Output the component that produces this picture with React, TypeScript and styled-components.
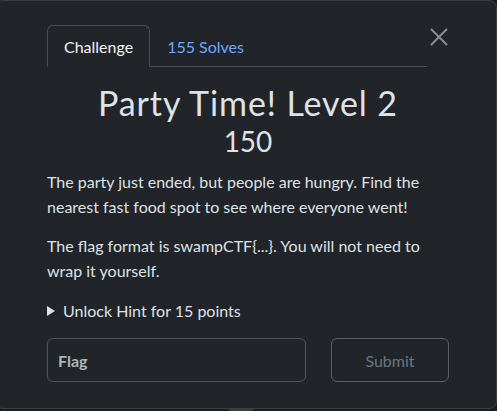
import React from 'react';
import styled, { createGlobalStyle } from 'styled-components';

const GlobalStyle = createGlobalStyle`
  html, body {
    margin: 0;
    padding: 0;
    background: #1b1e21;
    overflow: hidden;
  }
  * { box-sizing: border-box; }
`;

const Modal = styled.div`
  width: 502px;
  height: 409px;
  margin-left: -5px;
  background: #212529;
  border: 1px solid #3a3e43;
  border-radius: 8px;
  padding: 24px 47px 0 51px;
  font-family: Lato, "Open Sans", sans-serif;
  color: #dee2e6;
`;

const Header = styled.div`
  display: flex;
  align-items: flex-start;
  gap: 2px;
`;

const Tabs = styled.div`
  flex: 1;
  display: flex;
  align-items: flex-end;
  border-bottom: 1px solid #495057;
  height: 42px;
`;

const Tab = styled.div<{ active?: boolean }>`
  display: flex;
  align-items: center;
  padding: 0 16px;
  height: 42px;
  margin-bottom: -1px;
  font-size: 16px;
  color: ${p => (p.active ? '#f1f3f5' : '#6ea8fe')};
  border: 1px solid ${p => (p.active ? '#495057' : 'transparent')};
  border-bottom: 1px solid ${p => (p.active ? '#212529' : 'transparent')};
  border-radius: 6px 6px 0 0;
  background: ${p => (p.active ? '#212529' : 'transparent')};
`;

const Close = styled.button`
  width: 20px;
  height: 20px;
  margin-top: 2px;
  padding: 0;
  border: none;
  background: none;
  display: flex;
  align-items: center;
  justify-content: center;
`;

const Title = styled.h3`
  margin: 16px 0 0;
  text-align: center;
  font-size: 34px;
  font-weight: 400;
  line-height: 40px;
  color: #dfe2e6;
  letter-spacing: 0.9px;
`;

const Points = styled.div`
  text-align: center;
  font-size: 28px;
  font-weight: 400;
  line-height: 36px;
  color: #dfe2e6;
`;

const Text = styled.p<{ gap: number }>`
  margin: ${p => p.gap}px 0 0;
  font-size: 16px;
  line-height: 25px;
  color: #dee2e6;
`;

const Hint = styled.div`
  margin-top: 18px;
  display: flex;
  align-items: center;
  gap: 8px;
  font-size: 16px;
  color: #dee2e6;
`;

const Caret = styled.span`
  width: 0;
  height: 0;
  border-top: 5px solid transparent;
  border-bottom: 5px solid transparent;
  border-left: 8px solid #dee2e6;
`;

const FormRow = styled.div`
  margin-top: 18px;
  display: flex;
  gap: 25px;
`;

const FlagInput = styled.input`
  flex: 1;
  height: 44px;
  background: #212529;
  border: 1px solid #4f555b;
  border-radius: 6px;
  padding: 0 10px;
  font-family: Lato, "Open Sans", sans-serif;
  font-size: 16px;
  font-weight: 700;
  color: #dee2e6;
  outline: none;
  &::placeholder {
    color: #adb5bd;
  }
`;

const SubmitButton = styled.button`
  width: 118px;
  height: 44px;
  background: transparent;
  border: 1px solid #5a6066;
  border-radius: 6px;
  font-family: Lato, "Open Sans", sans-serif;
  font-size: 16px;
  color: #6c757d;
`;

const Peek = styled.div`
  width: 24px;
  height: 2px;
  margin-left: 229px;
  background: #3d3f2a;
`;

export default function App() {
  return (
    <>
      <GlobalStyle />
      <Modal>
        <Header>
          <Tabs>
            <Tab active>Challenge</Tab>
            <Tab>155 Solves</Tab>
          </Tabs>
          <Close aria-label="Close">
            <svg width="18" height="18" viewBox="0 0 18 18">
              <path d="M1 1 L17 17 M17 1 L1 17" stroke="#8a8d91" strokeWidth="2" />
            </svg>
          </Close>
        </Header>
        <Title>Party Time! Level 2</Title>
        <Points>150</Points>
        <Text gap={10}>
          The party just ended, but people are hungry. Find the nearest fast food spot to see where everyone went!
        </Text>
        <Text gap={14}>The flag format is swampCTF&#123;...&#125;. You will not need to wrap it yourself.</Text>
        <Hint>
          <Caret />
          Unlock Hint for 15 points
        </Hint>
        <FormRow>
          <FlagInput placeholder="Flag" />
          <SubmitButton>Submit</SubmitButton>
        </FormRow>
      </Modal>
      <Peek />
    </>
  );
}
